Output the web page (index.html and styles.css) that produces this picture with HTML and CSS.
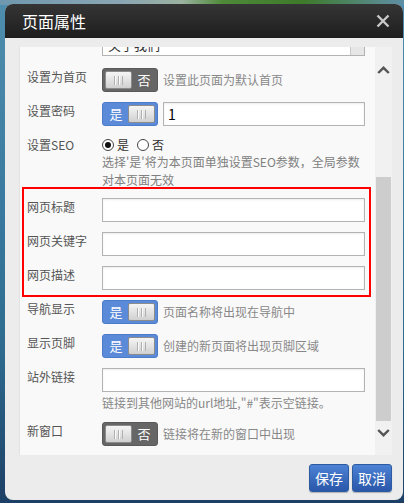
FILE: index.html
```html
<!DOCTYPE html>
<html lang="zh-CN">
<head>
<meta charset="utf-8">
<title>页面属性</title>
<link rel="stylesheet" href="styles.css">
</head>
<body>
<div class="dialog">
  <div class="hd">
    <span class="title">页面属性</span>
    <svg class="close" width="14" height="14" viewBox="0 0 14 14"><path d="M1.5 1.5L12.5 12.5M12.5 1.5L1.5 12.5" stroke="#c9c9c9" stroke-width="2.4" fill="none"/></svg>
  </div>
  <div class="bd">
    <div class="scroll">
      <div class="panel">
        <div class="inner">
          <div class="row row-select">
            <div class="label"></div>
            <div class="select"><span class="sel-text">关于我们</span><span class="sel-btn"></span></div>
          </div>
          <div class="row">
            <div class="label">设置为首页</div>
            <span class="switch off"><span class="knob"></span><span class="txt">否</span></span>
            <span class="desc">设置此页面为默认首页</span>
          </div>
          <div class="row">
            <div class="label">设置密码</div>
            <span class="switch on"><span class="txt">是</span><span class="knob"></span></span>
            <div class="input short">1</div>
          </div>
          <div class="row row-seo">
            <div class="label">设置SEO</div>
            <div class="ctl">
              <div class="radios">
                <span class="radio checked"></span><span class="rtxt">是</span>
                <span class="radio"></span><span class="rtxt">否</span>
              </div>
              <div class="note">选择'是'将为本页面单独设置SEO参数，全局参数<br>对本页面无效</div>
            </div>
          </div>
          <div class="hl">
            <div class="row">
              <div class="label">网页标题</div>
              <div class="input"></div>
            </div>
            <div class="row">
              <div class="label">网页关键字</div>
              <div class="input"></div>
            </div>
            <div class="row last">
              <div class="label">网页描述</div>
              <div class="input"></div>
            </div>
          </div>
          <div class="row after-hl">
            <div class="label">导航显示</div>
            <span class="switch on"><span class="txt">是</span><span class="knob"></span></span>
            <span class="desc">页面名称将出现在导航中</span>
          </div>
          <div class="row">
            <div class="label">显示页脚</div>
            <span class="switch on"><span class="txt">是</span><span class="knob"></span></span>
            <span class="desc">创建的新页面将出现页脚区域</span>
          </div>
          <div class="row">
            <div class="label">站外链接</div>
            <div class="ctl">
              <div class="input field"></div>
              <div class="help">链接到其他网站的url地址,"#"表示空链接。</div>
            </div>
          </div>
          <div class="row">
            <div class="label">新窗口</div>
            <span class="switch off"><span class="knob"></span><span class="txt">否</span></span>
            <span class="desc">链接将在新的窗口中出现</span>
          </div>
        </div>
      </div>
      <div class="sbar">
        <svg class="arr up" width="13" height="8" viewBox="0 0 13 8"><path d="M1.2 7L6.5 1.8L11.8 7" stroke="#555" stroke-width="2.4" fill="none"/></svg>
        <div class="thumb"></div>
        <svg class="arr down" width="13" height="8" viewBox="0 0 13 8"><path d="M1.2 1L6.5 6.2L11.8 1" stroke="#555" stroke-width="2.4" fill="none"/></svg>
      </div>
    </div>
    <div class="ft">
      <button class="btn">保存</button>
      <button class="btn">取消</button>
    </div>
  </div>
</div>
</body>
</html>
```
FILE: styles.css
```css
html, body {
  margin: 0;
  height: 503px;
  overflow: hidden;
}
body {
  box-sizing: border-box;
  padding: 4px 0 0 5px;
  font-family: "Noto Sans CJK SC", "Noto Sans", sans-serif;
  background:
    linear-gradient(90deg, #6f98ae 0, #8aa6b4 30%, #9bb2a0 45%, #4e8a38 55%, #3d7a2a 75%, #5f8fa6 100%) top / 100% 5px no-repeat,
    linear-gradient(180deg, #4f8ead 0, #3a7aa0 40%, #2d6a8e 70%, #1d3f66 100%);
}
.dialog {
  width: 398px;
  height: 496px;
  border-radius: 8px;
  background: #ececec;
  overflow: hidden;
  display: flex;
  flex-direction: column;
}
.hd {
  height: 34px;
  flex: none;
  background: linear-gradient(#353535, #1e1e1e);
  display: flex;
  align-items: center;
  justify-content: space-between;
  padding: 0 13px 0 17px;
}
.title {
  color: #fff;
  font-size: 16px;
  line-height: 34px;
}
.close { display: block; }
.bd {
  flex: 1;
  display: flex;
  flex-direction: column;
  padding: 9px 11px 0 14px;
}
.scroll {
  height: 408px;
  display: flex;
}
.panel {
  flex: 1;
  background: #f9f9f9;
  overflow: hidden;
  box-shadow: inset 1px 0 #e2e2e2;
}
.inner {
  margin-top: -15px;
  padding: 0 10px 0 8px;
}
.row {
  display: flex;
  align-items: flex-start;
  margin-bottom: 10px;
}
.row-select { margin-bottom: 12px; }
.label {
  width: 75px;
  flex: none;
  font-size: 12px;
  line-height: 18px;
  color: #555;
  white-space: nowrap;
}
.select {
  flex: 1;
  height: 24px;
  box-sizing: border-box;
  border: 1px solid #b3b3b3;
  background: #fff;
  display: flex;
}
.sel-text {
  flex: 1;
  padding-left: 5px;
  font-size: 13px;
  line-height: 24px;
  color: #333;
}
.sel-btn {
  width: 13px;
  background: #e6e6e6;
  border-left: 1px solid #c8c8c8;
}
.switch {
  width: 56px;
  height: 24px;
  flex: none;
  box-sizing: border-box;
  border-radius: 3px;
  display: flex;
  align-items: center;
}
.switch.off {
  background: #666;
  border: 1px solid #5a5a5a;
  padding: 0 1px 0 2px;
}
.switch.on {
  background: #5b8bd8;
  border: 1px solid #4c7cc9;
  padding: 0 2px 0 1px;
}
.knob {
  width: 27px;
  height: 18px;
  box-sizing: border-box;
  border: 1px solid #8c8c8c;
  border-radius: 2px;
  background: linear-gradient(#f5f5f5, #d0d0d0);
  display: flex;
  align-items: center;
  justify-content: center;
}
.knob::before {
  content: "";
  width: 9px;
  height: 9px;
  background: repeating-linear-gradient(90deg, #b0b0b0 0 1px, #fafafa 1px 2px, transparent 2px 4px);
}
.txt {
  flex: 1;
  text-align: center;
  color: #fff;
  font-size: 13px;
  line-height: 22px;
}
.desc {
  margin-left: 5px;
  font-size: 12px;
  line-height: 24px;
  color: #888;
  white-space: nowrap;
}
.input {
  flex: 1;
  height: 24px;
  box-sizing: border-box;
  border: 1px solid #b3b3b3;
  background: #fff;
  box-shadow: inset 0 1px 2px rgba(0, 0, 0, 0.08);
  font-size: 14px;
  line-height: 22px;
  color: #000;
  padding-left: 4px;
}
.input.short { margin-left: 5px; }
.input.field { flex: none; }
.ctl {
  flex: 1;
  display: flex;
  flex-direction: column;
}
.row-seo { margin-bottom: 0; }
.radios {
  height: 17px;
  display: flex;
  align-items: center;
  font-size: 12px;
  color: #333;
}
.radio {
  width: 12px;
  height: 12px;
  box-sizing: border-box;
  border: 1px solid #444;
  border-radius: 50%;
  background: #fff;
  display: flex;
  align-items: center;
  justify-content: center;
}
.radio.checked::after {
  content: "";
  width: 6px;
  height: 6px;
  border-radius: 50%;
  background: #111;
}
.rtxt { margin: 0 8px 0 3px; line-height: 17px; }
.note {
  font-size: 12px;
  line-height: 18px;
  color: #808080;
  white-space: nowrap;
}
.hl {
  border: 2px solid #f00;
  margin: -2px -6px 0 -5px;
  padding: 9px 4px 5px 3px;
}
.hl .row.last { margin-bottom: 0; }
.after-hl { margin-top: 3px; }
.help {
  margin-top: 2px;
  font-size: 12px;
  line-height: 18px;
  color: #888;
  white-space: nowrap;
}
.sbar {
  width: 17px;
  flex: none;
  background: #f1f1f1;
  display: flex;
  flex-direction: column;
  align-items: center;
  padding-top: 19px;
  box-sizing: border-box;
}
.arr { display: block; flex: none; }
.thumb {
  width: 15px;
  height: 244px;
  margin-top: 103px;
  background: #cdcdcd;
  flex: none;
}
.arr.down { margin-top: 8px; }
.ft {
  display: flex;
  justify-content: flex-end;
  gap: 3px;
  margin-top: 9px;
}
.btn {
  width: 40px;
  height: 28px;
  padding: 0;
  border: 1px solid #2c5aa3;
  border-radius: 3px;
  background: linear-gradient(#4c82d4, #2a57a9);
  box-shadow: 0 1px 1px rgba(0, 0, 0, 0.25);
  color: #fff;
  font-family: "Noto Sans CJK SC", sans-serif;
  font-size: 14px;
  line-height: 26px;
}
```
